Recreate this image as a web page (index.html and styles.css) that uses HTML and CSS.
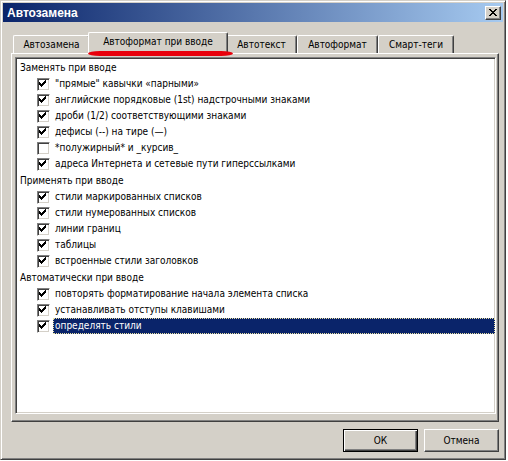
FILE: index.html
```
<!DOCTYPE html>
<html lang="ru">
  <head>
    <meta charset="UTF-8" />
    <meta name="viewport" content="width=device-width, initial-scale=1.0" />
    <title>Автозамена</title>
    <link rel="stylesheet" href="styles.css">
  </head>

  <body>
    <svg class="defs" width="0" height="0">
      <symbol id="chk" viewBox="0 0 13 13">
        <path d="M8 2h1v1H8zM7 3h2v1H7zM2 4h1v1H2zM6 4h3v1H6zM2 5h2v1H2zM5 5h3v1H5zM2 6h5v1H2zM3 7h3v1H3zM4 8h1v1H4z" />
      </symbol>
    </svg>

    <div class="window">
      <div class="titlebar">
        <span class="title">Автозамена</span>
        <span class="close">
          <svg width="8" height="7" viewBox="0 0 8 7"><path d="M0 0h2v1H0zM6 0h2v1H6zM1 1h2v1H1zM5 1h2v1H5zM2 2h4v1H2zM3 3h2v1H3zM2 4h4v1H2zM1 5h2v1H1zM5 5h2v1H5zM0 6h2v1H0zM6 6h2v1H6z" /></svg>
        </span>
      </div>

      <div class="content">
        <div class="tabs">
          <div class="tab">Автозамена</div>
          <div class="tab active">Автоформат при вводе</div>
          <div class="tab">Автотекст</div>
          <div class="tab">Автоформат</div>
          <div class="tab">Смарт-теги</div>
        </div>

        <div class="panel">
          <div class="list">
            <div class="group">Заменять при вводе</div>
            <div class="item"><span class="cb"><svg><use href="#chk" /></svg></span><span class="label">"прямые" кавычки «парными»</span></div>
            <div class="item"><span class="cb"><svg><use href="#chk" /></svg></span><span class="label">английские порядковые (1st) надстрочными знаками</span></div>
            <div class="item"><span class="cb"><svg><use href="#chk" /></svg></span><span class="label">дроби (1/2) соответствующими знаками</span></div>
            <div class="item"><span class="cb"><svg><use href="#chk" /></svg></span><span class="label">дефисы (--) на тире (—)</span></div>
            <div class="item"><span class="cb"></span><span class="label">*полужирный* и _курсив_</span></div>
            <div class="item"><span class="cb"><svg><use href="#chk" /></svg></span><span class="label">адреса Интернета и сетевые пути гиперссылками</span></div>

            <div class="group">Применять при вводе</div>
            <div class="item"><span class="cb"><svg><use href="#chk" /></svg></span><span class="label">стили маркированных списков</span></div>
            <div class="item"><span class="cb"><svg><use href="#chk" /></svg></span><span class="label">стили нумерованных списков</span></div>
            <div class="item"><span class="cb"><svg><use href="#chk" /></svg></span><span class="label">линии границ</span></div>
            <div class="item"><span class="cb"><svg><use href="#chk" /></svg></span><span class="label">таблицы</span></div>
            <div class="item"><span class="cb"><svg><use href="#chk" /></svg></span><span class="label">встроенные стили заголовков</span></div>

            <div class="group">Автоматически при вводе</div>
            <div class="item"><span class="cb"><svg><use href="#chk" /></svg></span><span class="label">повторять форматирование начала элемента списка</span></div>
            <div class="item"><span class="cb"><svg><use href="#chk" /></svg></span><span class="label">устанавливать отступы клавишами</span></div>
            <div class="item selected"><span class="cb"><svg><use href="#chk" /></svg></span><span class="label">определять стили</span></div>
          </div>
        </div>

        <div class="buttons">
          <div class="btn default">ОК</div>
          <div class="btn">Отмена</div>
        </div>
      </div>

      <!-- пометка красным под активной вкладкой -->
      <div class="mark"></div>
    </div>
  </body>
</html>
```

FILE: styles.css
```
body {
  margin: 0;
  background: #fff;
  font-family: "DejaVu Sans Condensed", "Liberation Sans", Arial, sans-serif;
  font-size: 10px;
  color: #000;
}
.defs {
  position: absolute;
}
.window {
  position: relative;
  width: 506px;
  height: 460px;
  box-sizing: border-box;
  padding: 2px;
  background: #d4d0c8;
  border: 1px solid;
  border-color: #d4d0c8 #404040 #404040 #d4d0c8;
  box-shadow: inset 1px 1px #fff, inset -1px -1px #808080;
}
.titlebar {
  height: 19px;
  display: flex;
  align-items: center;
  justify-content: space-between;
  padding: 0 2px 0 4px;
  background: linear-gradient(to right, #0a246a, #a6caf0);
}
.title {
  color: #fff;
  font-family: "Liberation Sans", Arial, sans-serif;
  font-size: 12px;
  font-weight: bold;
}
.close {
  width: 16px;
  height: 14px;
  box-sizing: border-box;
  display: flex;
  align-items: center;
  justify-content: center;
  background: #d4d0c8;
  border: 1px solid;
  border-color: #fff #404040 #404040 #fff;
  box-shadow: inset -1px -1px #808080;
}
.content {
  padding: 10px 4px 0 8px;
}
.tabs {
  display: flex;
  align-items: flex-end;
  height: 21px;
  padding-left: 2px;
}
.tab {
  height: 18px;
  box-sizing: border-box;
  padding-top: 3px;
  text-align: center;
  border: 1px solid;
  border-color: #fff #404040 transparent #fff;
  border-bottom: 0;
  border-radius: 2px 2px 0 0;
  box-shadow: inset -1px 0 #808080;
  white-space: nowrap;
}
.tab:nth-child(1) { width: 77px; }
.tab:nth-child(3) { width: 71px; }
.tab:nth-child(4) { width: 81px; }
.tab:nth-child(5) { width: 76px; }
.tab.active {
  position: relative;
  z-index: 1;
  width: 140px;
  height: 22px;
  margin: 0 -2px -1px;
  padding-top: 3px;
  background: #d4d0c8;
}
.panel {
  height: 369px;
  box-sizing: border-box;
  padding: 3px 2px 7px 3px;
  border: 1px solid;
  border-color: #fff #404040 #404040 #fff;
  box-shadow: inset -1px -1px #808080;
}
.list {
  height: 100%;
  box-sizing: border-box;
  padding-top: 1px;
  background: #fff;
  border: 1px solid;
  border-color: #808080 #fff #fff #808080;
  box-shadow: inset 1px 1px #404040, inset -1px -1px #d4d0c8;
}
.group {
  height: 16px;
  line-height: 17px;
  padding-left: 4px;
}
.group + .item {
  margin-top: 1px;
}
.item {
  display: flex;
  align-items: center;
  height: 16px;
  padding-left: 21px;
}
.cb {
  width: 13px;
  height: 13px;
  box-sizing: border-box;
  background: #fff;
  border: 1px solid;
  border-color: #808080 #fff #fff #808080;
  box-shadow: inset 1px 1px #404040, inset -1px -1px #d4d0c8;
  position: relative;
}
.cb svg {
  position: absolute;
  left: -1px;
  top: -1px;
  width: 13px;
  height: 13px;
  shape-rendering: crispEdges;
}
.label {
  flex: 1;
  margin-left: 3px;
  padding-left: 1px;
  line-height: 14px;
  border: 1px solid transparent;
  white-space: nowrap;
}
.item.selected .label {
  background: #0a246a;
  color: #fff;
  border: 1px dotted #e8e0a0;
}
.buttons {
  display: flex;
  justify-content: flex-end;
  gap: 6px;
  margin-top: 7px;
}
.btn {
  width: 75px;
  height: 23px;
  box-sizing: border-box;
  display: flex;
  align-items: center;
  justify-content: center;
  border: 1px solid;
  border-color: #fff #404040 #404040 #fff;
  box-shadow: inset -1px -1px #808080;
}
.btn.default {
  border-color: #000;
  box-shadow: inset 1px 1px #fff, inset -1px -1px #404040, inset -2px -2px #808080;
}
.mark {
  position: absolute;
  z-index: 2;
  left: 87px;
  top: 50px;
  width: 145px;
  height: 5px;
  background: #e8000c;
  border-radius: 12px / 2.5px;
}
```
